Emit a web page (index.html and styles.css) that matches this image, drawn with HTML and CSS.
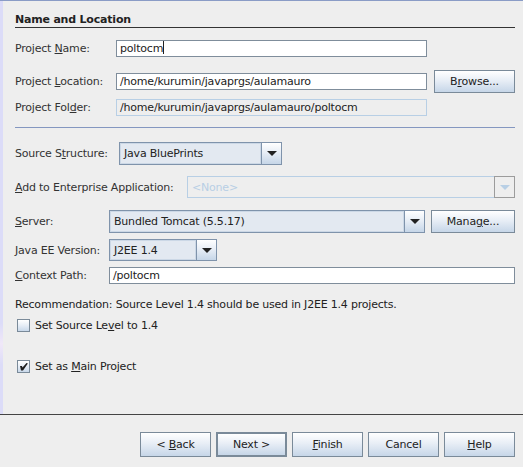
FILE: index.html
```html
<!DOCTYPE html>
<html>
<head>
<meta charset="utf-8">
<link rel="stylesheet" href="styles.css">
</head>
<body>
<div class="page">
  <div class="main">
    <div class="stripe"></div>
    <div class="content">
      <div class="header">Name and Location</div>

      <div class="row r1">
        <label class="lbl w101">Project <u>N</u>ame:</label>
        <div class="field grow">poltocm<span class="caret"></span></div>
        <div class="spacer-btn"></div>
      </div>

      <div class="row r2">
        <label class="lbl w101">Project <u>L</u>ocation:</label>
        <div class="field grow">/home/kurumin/javaprgs/aulamauro</div>
        <button class="btn browse">B<u>r</u>owse...</button>
      </div>

      <div class="row r3">
        <label class="lbl w101">Project Fol<u>d</u>er:</label>
        <div class="field disabled grow">/home/kurumin/javaprgs/aulamauro/poltocm</div>
        <div class="spacer-btn"></div>
      </div>

      <div class="sep"></div>

      <div class="row r4">
        <label class="lbl w104">Source S<u>t</u>ructure:</label>
        <div class="combo cw163">
          <div class="combo-text">Java BluePrints</div>
          <div class="arrow"><span class="tri"></span></div>
        </div>
      </div>

      <div class="row r5">
        <label class="lbl w172"><u>A</u>dd to Enterprise Application:</label>
        <div class="combo dis grow">
          <div class="combo-text">&lt;None&gt;</div>
          <div class="arrow"><span class="tri"></span></div>
        </div>
      </div>

      <div class="row r6">
        <label class="lbl w94"><u>S</u>erver:</label>
        <div class="combo grow">
          <div class="combo-text">Bundled Tomcat (5.5.17)</div>
          <div class="arrow"><span class="tri"></span></div>
        </div>
        <button class="btn manage">Mana<u>g</u>e...</button>
      </div>

      <div class="row r7">
        <label class="lbl w94"><u>J</u>ava EE Version:</label>
        <div class="combo cw108">
          <div class="combo-text">J2EE 1.4</div>
          <div class="arrow"><span class="tri"></span></div>
        </div>
      </div>

      <div class="row r8">
        <label class="lbl w94"><u>C</u>ontext Path:</label>
        <div class="field grow">/poltocm</div>
      </div>

      <div class="note">Recommendation: Source Level 1.4 should be used in J2EE 1.4 projects.</div>

      <div class="check c1">
        <span class="box"></span>
        <span>Set Source Le<u>v</u>el to 1.4</span>
      </div>

      <div class="check c2">
        <span class="box checked"><svg width="11" height="11" viewBox="0 0 11 11"><path d="M2 5 L4 5 L4.5 6.5 L8.5 2 L9.5 2 L9.5 3 L5 9.5 L3 9.5 Z" fill="#1e1e1e"/></svg></span>
        <span>Set as <u>M</u>ain Project</span>
      </div>
    </div>
  </div>
  <div class="footer">
    <button class="btn fb">&lt; <u>B</u>ack</button>
    <button class="btn fb default">Next &gt;</button>
    <button class="btn fb"><u>F</u>inish</button>
    <button class="btn fb">Cancel</button>
    <button class="btn fb"><u>H</u>elp</button>
  </div>
</div>
</body>
</html>
```

FILE: styles.css
```css
html, body {
  margin: 0;
  padding: 0;
  background: #eeeeee;
}
body {
  font-family: "DejaVu Sans", sans-serif;
  font-size: 11px;
  letter-spacing: -0.2px;
  color: #333333;
}
.page {
  width: 523px;
  height: 467px;
  display: flex;
  flex-direction: column;
  border-top: 1px solid #8a9cc6;
  box-sizing: border-box;
}
.main {
  flex: 1;
  display: flex;
}
.stripe {
  width: 3px;
  background: linear-gradient(to bottom, #dcdcf8 0%, #dcdcf8 78%, #f0e8f8 83%, #dcdcf8 88%, #dcdcf8 100%);
}
.content {
  flex: 1;
  padding: 0 8px 0 12px;
  display: flex;
  flex-direction: column;
}
.header {
  height: 26px;
  display: flex;
  align-items: flex-end;
  line-height: 14px;
  font-weight: bold;
  color: #222;
  border-bottom: 1px solid #333333;
}
.row {
  display: flex;
  align-items: center;
}
.lbl { flex: none; }
.w101 { width: 101px; }
.w104 { width: 104px; }
.w172 { width: 172px; }
.w94 { width: 94px; }
.grow { flex: 1; }
.r1 { margin-top: 12px; height: 17px; }
.r2 { margin-top: 13px; height: 23px; }
.r3 { margin-top: 6px; height: 17px; }
.sep {
  margin-top: 11px;
  border-top: 1px solid #8497c0;
}
.r4 { margin-top: 14px; height: 23px; }
.r5 { margin-top: 11px; height: 22px; }
.r6 { margin-top: 12px; height: 23px; }
.r7 { margin-top: 6px; height: 22px; }
.r8 { margin-top: 6px; height: 17px; }
.field {
  height: 17px;
  box-sizing: border-box;
  background: #ffffff;
  border: 1px solid #7f8d9b;
  padding: 0 3px;
  line-height: 15px;
  color: #222;
  white-space: nowrap;
  overflow: hidden;
}
.field.disabled {
  background: #eeeeee;
  border-color: #b8cfe5;
}
.caret {
  display: inline-block;
  width: 1px;
  height: 13px;
  background: #222;
  vertical-align: -2px;
}
.spacer-btn {
  width: 88px;
  flex: none;
}
.btn {
  font-family: "DejaVu Sans", sans-serif;
  font-size: 11px;
  letter-spacing: -0.2px;
  color: #222;
  box-sizing: border-box;
  border: 1px solid #7a8a99;
  background: linear-gradient(to bottom, #ffffff 0%, #e8eef6 45%, #c6d6e8 100%);
  padding: 0;
  margin: 0;
  height: 23px;
}
.browse { width: 81px; margin-left: 7px; }
.manage { width: 84px; margin-left: 6px; height: 23px; }
.combo {
  display: flex;
  height: 100%;
  box-sizing: border-box;
  border: 1px solid #7f93ab;
  background: #e3e9f1;
}
.cw163 { width: 163px; }
.cw108 { width: 108px; }
.combo-text {
  flex: 1;
  padding-left: 3px;
  display: flex;
  align-items: center;
  color: #222;
  white-space: nowrap;
  overflow: hidden;
  border: 1px solid #ccd8e6;
}
.arrow {
  width: 19px;
  flex: none;
  border-left: 1px solid #7f93ab;
  background: linear-gradient(to bottom, #ffffff 0%, #e8eef6 45%, #c6d6e8 100%);
  display: flex;
  align-items: center;
  justify-content: center;
}
.tri {
  width: 0;
  height: 0;
  border-left: 5px solid transparent;
  border-right: 5px solid transparent;
  border-top: 5px solid #222;
}
.combo.dis {
  border-color: #b8cfe5;
  background: #eeeeee;
}
.combo.dis .combo-text {
  color: #b8cfe5;
  border: none;
  padding-left: 4px;
}
.combo.dis .arrow {
  width: 19px;
  border: 1px solid #9c9c9c;
  margin: -1px -1px -1px 0;
  background: #eeeeee;
}
.combo.dis .tri { border-top-color: #b8cfe5; }
.note {
  margin-top: 13px;
  line-height: 15px;
  height: 15px;
  color: #222;
}
.check {
  display: flex;
  align-items: center;
  height: 13px;
  padding-left: 2px;
  color: #222;
}
.c1 { margin-top: 7px; }
.c2 { margin-top: 28px; }
.box {
  width: 13px;
  height: 13px;
  box-sizing: border-box;
  border: 1px solid #7a8a99;
  background: linear-gradient(to bottom, #ffffff 0%, #e6edf6 50%, #c8d8ea 100%);
  margin-right: 5px;
  display: flex;
  align-items: center;
  justify-content: center;
}
.footer {
  height: 53px;
  border-top: 1px solid #444444;
  box-sizing: border-box;
  display: flex;
  justify-content: flex-end;
  align-items: flex-start;
  padding: 17px 8px 0 0;
  gap: 5px;
}
.fb { width: 71px; height: 25px; }
.fb.default { border: 2px solid #7a8a99; }
u { text-decoration: underline; text-underline-offset: 1px; }
```
